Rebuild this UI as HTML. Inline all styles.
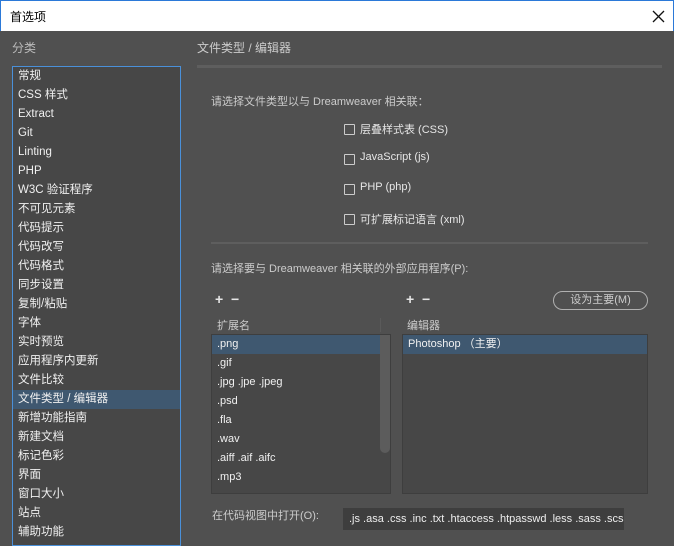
<!DOCTYPE html>
<html><head><meta charset="utf-8"><style>
*{margin:0;padding:0;box-sizing:border-box}
body{width:674px;height:539px;overflow:hidden;background:#505050;font-family:"Liberation Sans","Noto Sans CJK SC",sans-serif;font-size:11px;color:#e6e6e6;position:relative}
.a{position:absolute;white-space:nowrap}
.title{left:0;top:0;width:674px;height:31px;background:#fff;color:#000;font-size:12px;border:1px solid #2b79d8;border-bottom:none}
.side{left:12px;top:66px;width:169px;height:480px;border:1px solid #4a90d9;background:#474747}
.side div{height:19px;line-height:19px;padding-left:5px;font-size:11.5px;color:#f0f0f0}
.side .sel{background:#3f5870}
.cb{width:11px;height:11px;border:1px solid #ccc;border-radius:1px}
.list{background:#474747;border:1px solid #3e3e3e}
.list div{height:19px;line-height:19px;padding-left:5px;color:#f0f0f0}
.list .sel{background:#3f5870}
</style></head><body>
<div class="a title"><span style="position:absolute;left:9px;top:7px">首选项</span>
<svg style="position:absolute;left:651px;top:9px" width="13" height="13"><path d="M1 1L12 12M12 1L1 12" stroke="#111" stroke-width="1.3"/></svg></div>
<div class="a" style="left:12px;top:39px;color:#bbb;font-size:12px">分类</div>
<div class="a side">
<div>常规</div><div>CSS 样式</div><div>Extract</div><div>Git</div><div>Linting</div><div>PHP</div><div>W3C 验证程序</div><div>不可见元素</div><div>代码提示</div><div>代码改写</div><div>代码格式</div><div>同步设置</div><div>复制/粘贴</div><div>字体</div><div>实时预览</div><div>应用程序内更新</div><div>文件比较</div><div class="sel">文件类型 / 编辑器</div><div>新增功能指南</div><div>新建文档</div><div>标记色彩</div><div>界面</div><div>窗口大小</div><div>站点</div><div>辅助功能</div>
</div>
<div class="a" style="left:197px;top:39px;color:#ccc;font-size:12px">文件类型 / 编辑器</div>
<div class="a" style="left:197px;top:65px;width:465px;height:3px;background:#5e5e5e"></div>
<div class="a" style="left:211px;top:93px;color:#ccc">请选择文件类型以与 Dreamweaver 相关联：</div>
<div class="a cb" style="left:344px;top:124px"></div><div class="a" style="left:360px;top:121px">层叠样式表 (CSS)</div>
<div class="a cb" style="left:344px;top:154px"></div><div class="a" style="left:360px;top:151px">JavaScript (js)</div>
<div class="a cb" style="left:344px;top:184px"></div><div class="a" style="left:360px;top:181px">PHP (php)</div>
<div class="a cb" style="left:344px;top:214px"></div><div class="a" style="left:360px;top:211px">可扩展标记语言 (xml)</div>
<div class="a" style="left:211px;top:242px;width:437px;height:2px;background:#5e5e5e"></div>
<div class="a" style="left:211px;top:260px;color:#ccc">请选择要与 Dreamweaver 相关联的外部应用程序(P):</div>
<div class="a" style="left:215px;top:291px;font-size:14px;font-weight:bold">+ &nbsp;−</div>
<div class="a" style="left:406px;top:291px;font-size:14px;font-weight:bold">+ &nbsp;−</div>
<div class="a" style="left:553px;top:291px;width:95px;height:19px;border:1px solid #b0b0b0;border-radius:10px;text-align:center;line-height:17px;color:#ccc">设为主要(M)</div>
<div class="a" style="left:217px;top:317px;color:#ccc">扩展名</div>
<div class="a" style="left:380px;top:318px;width:1px;height:14px;background:#5a5a5a"></div>
<div class="a" style="left:407px;top:317px;color:#ccc">编辑器</div>
<div class="a list" style="left:211px;top:334px;width:180px;height:160px">
<div class="sel">.png</div><div>.gif</div><div>.jpg .jpe .jpeg</div><div>.psd</div><div>.fla</div><div>.wav</div><div>.aiff .aif .aifc</div><div>.mp3</div></div>
<div class="a" style="left:380px;top:335px;width:10px;height:118px;background:#5c5c5c;border-radius:0 0 5px 5px"></div>
<div class="a list" style="left:402px;top:334px;width:246px;height:160px"><div class="sel">Photoshop （主要）</div></div>
<div class="a" style="left:212px;top:507px;color:#ccc">在代码视图中打开(O):</div>
<div class="a" style="left:343px;top:508px;width:281px;height:22px;background:#3e3e3e;line-height:22px;padding-left:6px;overflow:hidden;color:#eee">.js .asa .css .inc .txt .htaccess .htpasswd .less .sass .scss</div>
</body></html>
